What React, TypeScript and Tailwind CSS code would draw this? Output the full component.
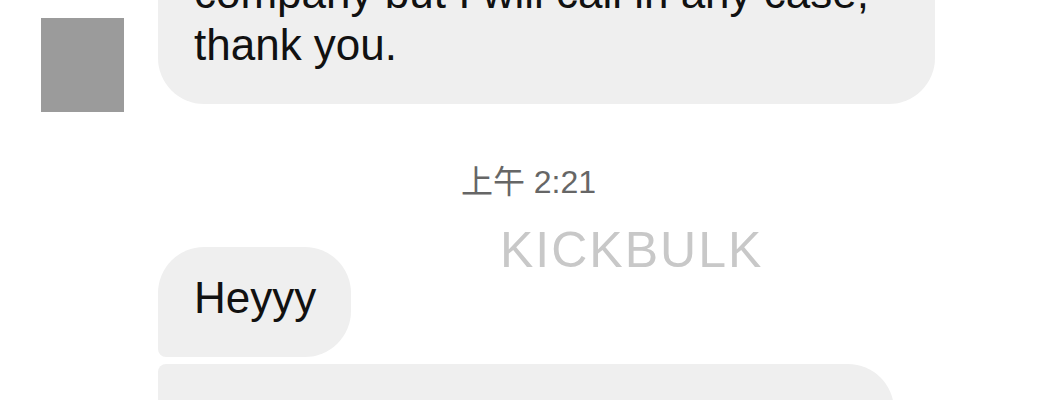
const font = { fontFamily: '"Liberation Sans", "Noto Sans CJK SC", Arial, sans-serif' };

function Bubble({ text, className }: { text: string; className: string }) {
  return (
    <div
      className={`bg-[#efefef] text-[#111111] text-[44px] leading-[52px] pb-[33px] pl-[36px] pr-[35px] ${className}`}
    >
      {text}
    </div>
  );
}

export default function App() {
  return (
    <div className="relative w-[1060px] h-[400px] overflow-hidden bg-white" style={font}>
      <div className="-mt-[58px] flex flex-col">
        <div className="flex items-end">
          <div className="ml-[41px] mb-[-8px] w-[83px] h-[94px] bg-[#9b9b9b] shrink-0" />
          <Bubble
            text="company but I will call in any case, thank you."
            className="ml-[34px] w-[777px] pt-[25px] rounded-[46px]"
          />
        </div>

        <div className="mt-[58px] h-[40px] text-center text-[32px] leading-[40px] text-[#666666] pr-[3px]">
          上午 2:21
        </div>

        <div className="mt-[45px] flex flex-col items-start gap-[7px] pl-[158px]">
          <Bubble text="Heyyy" className="pt-[25px] rounded-[46px] rounded-bl-[8px]" />
          <Bubble
            text="Thank you so much for the order"
            className="w-[736px] pt-[32px] rounded-[46px] rounded-tl-[8px]"
          />
        </div>
      </div>

      <div className="absolute left-[500px] top-[225px] text-[50px] leading-none tracking-[2px] text-[#c8c8c8] select-none">
        KICKBULK
      </div>
    </div>
  );
}
